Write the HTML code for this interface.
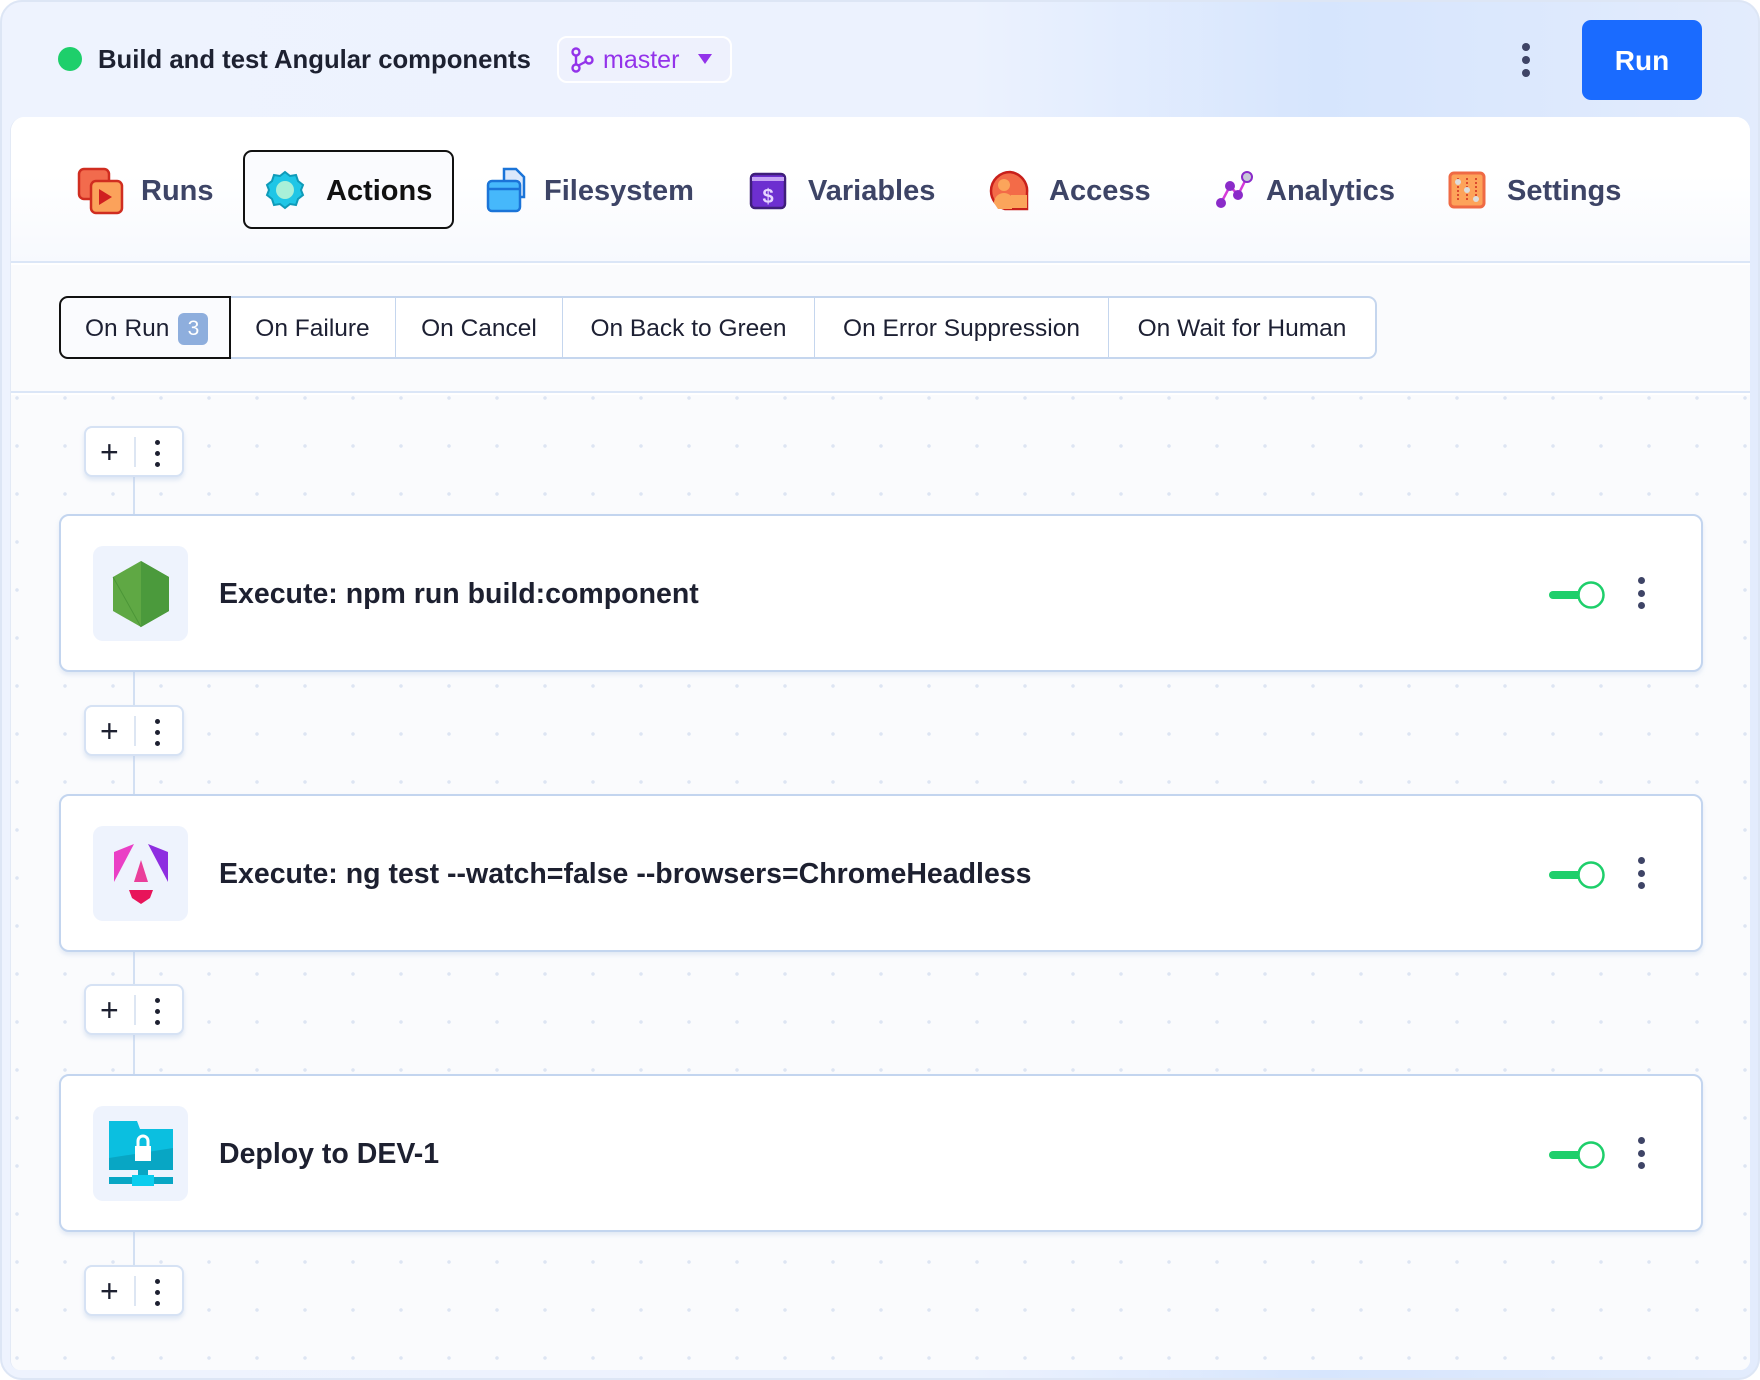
<!DOCTYPE html>
<html><head><meta charset="utf-8"><style>
*{box-sizing:border-box;margin:0;padding:0}
body{width:1760px;height:1380px;background:#fff;font-family:"Liberation Sans",sans-serif;position:relative;overflow:hidden}
.frame{position:absolute;left:0;top:0;width:1760px;height:1380px;border-radius:22px;background:linear-gradient(90deg,#eef3fe 0%,#ecf2fe 55%,#d6e5fd 75%,#e3ecfd 100%);overflow:hidden}
.fb{position:absolute;left:0;top:0;width:1760px;height:1380px;border-radius:22px;border:2px solid #dde6f5;pointer-events:none}
.abs{position:absolute}
.panel{position:absolute;left:10px;top:117px;width:1740px;height:1253px;background:#fff;border-radius:14px 14px 10px 10px;overflow:hidden;border-left:1px solid #e3eaf6}
.tabs{position:absolute;left:0;top:0;width:1740px;height:146px;background:linear-gradient(#fff 40%,#f7f9fe);border-bottom:2px solid #dbe6f7}
.tab{position:absolute;top:56px;height:36px;display:flex;align-items:center;font-size:29px;font-weight:600;color:#3d4466}
.sub{position:absolute;top:148px;left:0;width:1740px;height:128px;background:#fafbfd;border-bottom:2px solid #dbe6f7}
.seg{position:absolute;top:31px;height:63px;padding-top:2px;background:#fff;border:2px solid #c5d6ee;border-left:none;font-size:24.5px;color:#1d2033;display:flex;align-items:center;justify-content:center}
.canvas{position:absolute;top:278px;left:0;width:1740px;height:980px;background-color:#fafbfd;background-image:radial-gradient(circle,#dde5f3 1.6px,transparent 2px);background-size:48px 48px;background-position:-18px -21px}
.card{position:absolute;left:48px;width:1644px;height:158px;background:#fff;border:2px solid #c3d5ef;border-radius:10px;box-shadow:0 3px 4px rgba(180,200,230,.35)}
.ico{position:absolute;left:32px;top:30px;width:95px;height:95px;background:#eef3fd;border-radius:10px;display:flex;align-items:center;justify-content:center}
.ct{position:absolute;left:158px;top:62px;font-size:28.5px;font-weight:600;color:#1d2030}
.tog{position:absolute;left:1488px;top:64px}
.keb{position:absolute;left:1577px;top:61px;width:8px}
.keb i{display:block;width:7px;height:7px;border-radius:50%;background:#3e4466;margin-bottom:5.5px}
.add{position:absolute;left:73px;width:100px;height:51px;background:#fff;border:2px solid #d6e2f4;border-radius:8px;box-shadow:0 3px 4px rgba(180,200,230,.4)}
.add .pl{position:absolute;left:14px;top:8px;font-size:32px;color:#1d2030;line-height:32px}
.add .dv{position:absolute;left:48px;top:9px;width:2px;height:30px;background:#dde6f3}
.add .kb{position:absolute;left:69px;top:12px}
.add .kb i{display:block;width:5px;height:5px;border-radius:50%;background:#1d2030;margin-bottom:6px}
.vl{position:absolute;left:122px;width:2px;background:#d3e0f3}
</style></head><body>
<div class="frame">
 <div class="abs" style="left:58px;top:47px;width:24px;height:24px;border-radius:50%;background:#1ecf6b"></div>
 <div class="abs" style="left:98px;top:46px;font-size:25.7px;font-weight:600;color:#1d2131">Build and test Angular components</div>
 <div class="abs" style="left:557px;top:36px;width:175px;height:47px;border:2px solid #fff;border-radius:10px;background:#eef1fd"></div>
 <svg class="abs" style="left:570px;top:47px" width="26" height="26" viewBox="0 0 26 26" fill="none" stroke="#9333ea" stroke-width="2.4"><circle cx="6" cy="5" r="3.5"/><circle cx="6" cy="21" r="3.5"/><circle cx="19" cy="13" r="3.5"/><path d="M6 8.5v9M8.5 18.5 16 14.5"/></svg>
 <div class="abs" style="left:603px;top:46px;font-size:25px;color:#9333ea">master</div>
 <svg class="abs" style="left:697px;top:53px" width="16" height="12"><path d="M1 1h14L8 11z" fill="#9333ea"/></svg>
 <div class="abs" style="left:1522px;top:43px"><div style="width:8px;height:8px;border-radius:50%;background:#3e4466;margin-bottom:5px"></div><div style="width:8px;height:8px;border-radius:50%;background:#3e4466;margin-bottom:5px"></div><div style="width:8px;height:8px;border-radius:50%;background:#3e4466"></div></div>
 <div class="abs" style="left:1582px;top:20px;width:120px;height:80px;background:#1a6bff;border-radius:9px;color:#fff;font-size:28px;font-weight:600;display:flex;align-items:center;justify-content:center;padding-top:2px">Run</div>

 <div class="panel">
  <div class="tabs">
   <svg class="abs" style="left:66px;top:50px" width="48" height="48" viewBox="0 0 48 48"><rect x="2" y="2" width="30" height="30" rx="5" fill="#f26b4d" stroke="#d02d20" stroke-width="2.5"/><rect x="14" y="14" width="31" height="32" rx="5" fill="#fba25b" stroke="#d02d20" stroke-width="2.5"/><path d="M22 22v16l13-8z" fill="#d02020"/></svg>
   <div class="tab" style="left:130px">Runs</div>
   <div class="abs" style="left:232px;top:33px;width:211px;height:79px;border:2.5px solid #111;border-radius:9px;background:#fafbfe"></div>
   <svg class="abs" style="left:254px;top:53px" width="40" height="40" viewBox="0 0 40 40"><path d="M20 2l5 4 6-1 2 6 5 4-2 5 2 5-5 4-2 6-6-1-5 4-5-4-6 1-2-6-5-4 2-5-2-5 5-4 2-6 6 1z" fill="#1fc6e6" stroke="#0f9ab8" stroke-width="2"/><circle cx="20" cy="20" r="9" fill="#a8f0d8"/></svg>
   <div class="tab" style="left:315px;color:#111">Actions</div>
   <svg class="abs" style="left:475px;top:50px" width="40" height="46" viewBox="0 0 40 46"><path d="M18 2h12l8 8v20H18z" fill="#dbe8fb" stroke="#1b74d8" stroke-width="2.5"/><rect x="2" y="14" width="32" height="30" rx="4" fill="#46b8fb" stroke="#1b74d8" stroke-width="2.5"/><path d="M2 22h32" stroke="#1b74d8" stroke-width="2.5"/></svg>
   <div class="tab" style="left:533px">Filesystem</div>
   <svg class="abs" style="left:738px;top:55px" width="38" height="38" viewBox="0 0 38 38"><rect x="2" y="2" width="34" height="34" rx="4" fill="#6d2fd0" stroke="#3f1f7a" stroke-width="2.5"/><rect x="3" y="5" width="32" height="4" fill="#c7a4f5"/><text x="19" y="31" font-size="20" text-anchor="middle" fill="#e7d6ff" font-family="Liberation Sans" font-weight="bold">$</text></svg>
   <div class="tab" style="left:797px">Variables</div>
   <svg class="abs" style="left:977px;top:52px" width="44" height="44" viewBox="0 0 44 44"><path d="M22 3a19 19 0 0 0-19 19 19 19 0 0 0 14 18h22V24A19 19 0 0 0 22 3z" fill="#f36b48" stroke="#c8201b" stroke-width="2.5"/><circle cx="16" cy="16" r="6" fill="#fba55b"/><path d="M6 34a10 10 0 0 1 18-6v12H10z" fill="#fba55b"/><rect x="23" y="26" width="16" height="13" fill="#fba55b"/></svg>
   <div class="tab" style="left:1038px">Access</div>
   <svg class="abs" style="left:1204px;top:53px" width="40" height="40" viewBox="0 0 40 40"><path d="M6 33 L15 16 L23 25 L32 7" stroke="#d63ad9" stroke-width="2.5" fill="none"/><circle cx="6" cy="33" r="5" fill="#8a2bc9"/><circle cx="15" cy="16" r="5" fill="#8a2bc9"/><circle cx="23" cy="25" r="5" fill="#8a2bc9"/><circle cx="32" cy="7" r="5" fill="#c8c8d8" stroke="#8a2bc9" stroke-width="2"/></svg>
   <div class="tab" style="left:1255px">Analytics</div>
   <svg class="abs" style="left:1437px;top:54px" width="38" height="38" viewBox="0 0 38 38"><rect x="2" y="2" width="34" height="34" rx="4" fill="#fda35a" stroke="#ef6a44" stroke-width="3"/><path d="M10 7v24M19 7v24M28 7v24" stroke="#d02d20" stroke-width="1.5" stroke-dasharray="2 2"/><circle cx="10" cy="11" r="3" fill="#ddd"/><circle cx="19" cy="19" r="3" fill="#ddd"/><circle cx="28" cy="28" r="3" fill="#ddd"/></svg>
   <div class="tab" style="left:1496px">Settings</div>
  </div>
  <div class="sub">
   <div class="seg" style="left:219px;width:167px">On Failure</div>
   <div class="seg" style="left:385px;width:168px">On Cancel</div>
   <div class="seg" style="left:552px;width:253px">On Back to Green</div>
   <div class="seg" style="left:804px;width:295px">On Error Suppression</div>
   <div class="seg" style="left:1098px;width:268px;border-radius:0 9px 9px 0">On Wait for Human</div>
   <div class="seg" style="left:48px;width:172px;border:2.5px solid #111;border-radius:9px 0 0 9px;background:#fafbfe;justify-content:flex-start;padding-left:24px">On Run <span style="display:inline-block;margin-left:9px;width:30px;height:32px;border-radius:6px;background:#8eaedd;color:#fff;font-size:21px;text-align:center;line-height:32px">3</span></div>
  </div>
  <div class="canvas">
   <div class="vl" style="top:70px;height:850px"></div>
   <div class="add" style="top:31px"><span class="pl">+</span><span class="dv"></span><span class="kb"><i></i><i></i><i></i></span></div>
   <div class="add" style="top:310px"><span class="pl">+</span><span class="dv"></span><span class="kb"><i></i><i></i><i></i></span></div>
   <div class="add" style="top:589px"><span class="pl">+</span><span class="dv"></span><span class="kb"><i></i><i></i><i></i></span></div>
   <div class="add" style="top:870px"><span class="pl">+</span><span class="dv"></span><span class="kb"><i></i><i></i><i></i></span></div>

   <div class="card" style="top:119px">
    <div class="ico"><svg width="60" height="70" viewBox="0 0 60 70"><path d="M30 2 58 18v34L30 68 2 52V18z" fill="#5fa844"/><path d="M30 2 58 18v34L30 68z" fill="#4b9a3c"/><path d="M2 18l28 50" stroke="#3f8a30" stroke-width="1" opacity=".6"/></svg></div>
    <div class="ct">Execute: npm run build:component</div>
    <svg class="tog" width="60" height="30"><rect x="0" y="11" width="36" height="8" rx="4" fill="#1ecf6b"/><circle cx="42" cy="15" r="12.5" fill="#fff" stroke="#1ecf6b" stroke-width="2.5"/></svg>
    <div class="keb"><i></i><i></i><i></i></div>
   </div>
   <div class="card" style="top:399px">
    <div class="ico"><svg width="58" height="64" viewBox="0 0 58 64"><path d="M22 2 2 10v30z" fill="#ea3fc5"/><path d="M36 2 56 10v30z" fill="#8e2ee0"/><path d="M29 18 36 40H22z" fill="#ea3f9a"/><path d="M17 48h24l-3 8-9 6-9-6z" fill="#e8145a"/></svg></div>
    <div class="ct">Execute: ng test --watch=false --browsers=ChromeHeadless</div>
    <svg class="tog" width="60" height="30"><rect x="0" y="11" width="36" height="8" rx="4" fill="#1ecf6b"/><circle cx="42" cy="15" r="12.5" fill="#fff" stroke="#1ecf6b" stroke-width="2.5"/></svg>
    <div class="keb"><i></i><i></i><i></i></div>
   </div>
   <div class="card" style="top:679px">
    <div class="ico"><svg width="72" height="72" viewBox="0 0 72 72"><path d="M4 3h28l3 8h33v41H4z" fill="#0bbfe0"/><path d="M4 40 68 30v22H4z" fill="#08a6c4"/><rect x="30" y="28" width="16" height="15" fill="#fff"/><path d="M33 28v-5a5 5 0 0 1 10 0v5" stroke="#fff" stroke-width="3" fill="none"/><rect x="33" y="52" width="10" height="5" fill="#08a6c4"/><rect x="4" y="59" width="64" height="7" fill="#08a6c4"/><rect x="27" y="57" width="22" height="11" fill="#0bcdee"/></svg></div>
    <div class="ct">Deploy to DEV-1</div>
    <svg class="tog" width="60" height="30"><rect x="0" y="11" width="36" height="8" rx="4" fill="#1ecf6b"/><circle cx="42" cy="15" r="12.5" fill="#fff" stroke="#1ecf6b" stroke-width="2.5"/></svg>
    <div class="keb"><i></i><i></i><i></i></div>
   </div>
  </div>
 </div>
</div>
<div class="fb"></div>
</body></html>
